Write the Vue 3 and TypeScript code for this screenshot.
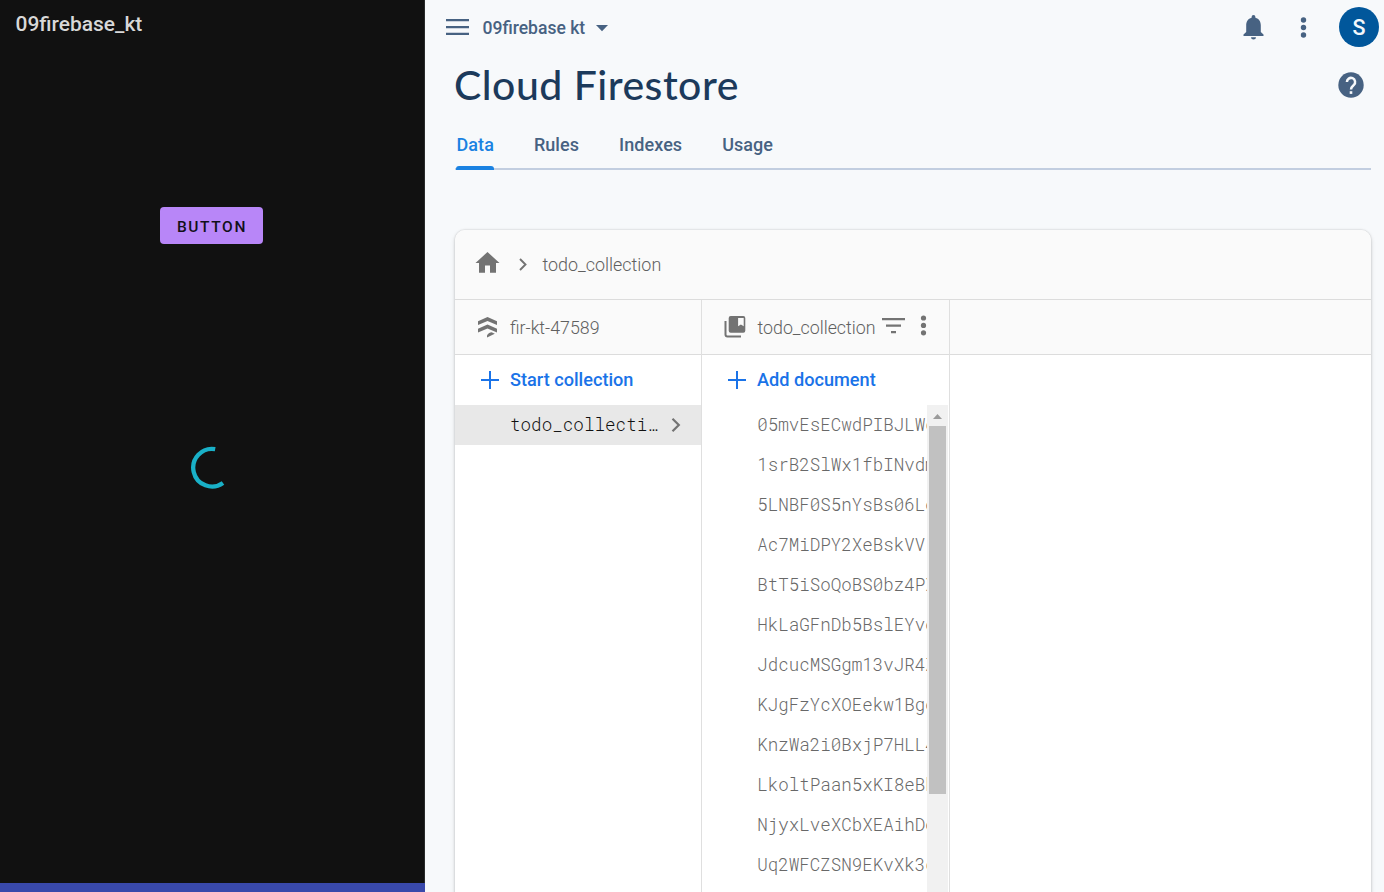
<script setup lang="ts">
import { ref } from 'vue'

const tabs = ['Data', 'Rules', 'Indexes', 'Usage']
const activeTab = ref('Data')

const documents: string[] = [
  '05mvEsECwdPIBJLWc',
  '1srB2SlWx1fbINvdm',
  '5LNBF0S5nYsBs06Lo',
  'Ac7MiDPY2XeBskVV',
  'BtT5iSoQoBS0bz4PX',
  'HkLaGFnDb5BslEYvo',
  'JdcucMSGgm13vJR4Z',
  'KJgFzYcXOEekw1Bgo',
  'KnzWa2i0BxjP7HLL4',
  'LkoltPaan5xKI8eBb',
  'NjyxLveXCbXEAihDo',
  'Uq2WFCZSN9EKvXk3c',
]
</script>

<template>
  <div class="screen">
    <section class="phone">
      <div class="phone-title">09firebase_kt</div>
      <button class="phone-button">BUTTON</button>
      <svg class="spinner" width="44" height="44" viewBox="0 0 44 44">
        <path d="M25.200 3.200A18.800 18.800 0 1 0 33 37" fill="none" stroke="#19b0c7" stroke-width="4.300" />
      </svg>
      <div class="phone-nav"></div>
    </section>

    <main class="console">
      <header class="topbar">
        <svg class="menu" width="24" height="18" viewBox="0 0 24 18">
          <path d="M0 1h23v2.200H0zM0 8h23v2.200H0zM0 14.800h23v2.200H0z" fill="#476282" />
        </svg>
        <span class="project">09firebase kt</span>
        <svg class="caret" width="12" height="7" viewBox="0 0 12 7"><path d="M0 0h12L6 6.200z" fill="#476282" /></svg>
        <svg class="bell" width="21" height="25" viewBox="-.5 0 21 25">
          <path d="M10 0a1.900 1.900 0 0 0-1.900 1.900v.8C4.500 3.600 2.700 6.700 2.700 10.200V17L0 19.600V21h20v-1.400L17.300 17v-6.800c0-3.500-1.800-6.600-5.400-7.500v-.8A1.900 1.900 0 0 0 10 0zM7.500 22.200a2.500 2.200 0 0 0 5 0z" fill="#476282" />
        </svg>
        <svg class="more" width="7" height="22" viewBox="-.5 0 7 22">
          <g fill="#476282"><circle cx="3" cy="3" r="2.700" /><circle cx="3" cy="10.500" r="2.700" /><circle cx="3" cy="18" r="2.700" /></g>
        </svg>
        <div class="avatar">S</div>
      </header>

      <div class="title-row">
        <h1>Cloud Firestore</h1>
        <svg width="26" height="26" viewBox="0 0 26 26">
          <circle cx="13" cy="13" r="12.700" fill="#476282" />
          <path d="M8.900 10a4.100 4.100 0 1 1 7 2.900c-1.600 1.400-2.900 2.100-2.900 4.700" fill="none" stroke="#f7f9fb" stroke-width="2.500" />
          <path d="M11.700 19.200h2.600v2.700h-2.600z" fill="#f7f9fb" />
        </svg>
      </div>

      <nav class="tabs">
        <a v-for="tab in tabs" :key="tab" class="tab" :class="{ active: tab === activeTab }" @click="activeTab = tab">{{ tab }}</a>
      </nav>

      <section class="card">
        <div class="crumbs">
          <svg class="home" width="25" height="21" viewBox="-.5 0 25 21"><path d="M9.500 20.800v-7.400h5v7.400h6V11H24L12 0 0 11h3.500v9.800z" fill="#737373" /></svg>
          <svg class="chev" width="8" height="13" viewBox="0 0 8 13"><path d="M1 1l5.500 5.500L1 12" fill="none" stroke="#737373" stroke-width="1.900" /></svg>
          <span class="crumb">todo_collection</span>
        </div>

        <div class="columns">
          <div class="column first">
            <div class="col-head">
              <svg class="db" width="21" height="21" viewBox="-.5 0 21 21">
                <g fill="#737373">
                  <path d="M10 0l9.500 4.200v3.900L10 4 .500 8.100V4.200z" />
                  <path d="M10 7.500l9.500 4.200v3.900L10 11.500.500 15.600v-3.900z" />
                  <path d="M9.500 20.500v-2.300c1.300-1.800 3-2.800 4.700-2.900l3.100 1.500z" />
                </g>
              </svg>
              <span class="root">fir-kt-47589</span>
            </div>
            <div class="add">
              <svg width="18" height="18" viewBox="0 0 18 18"><path d="M9 0v18M0 9h18" stroke="#1a73e8" stroke-width="2" /></svg>
              <span class="add-label">Start collection</span>
            </div>
            <div class="collection">
              <span class="mono">todo_collecti…</span>
              <svg width="10" height="16" viewBox="0 0 10 16"><path d="M1.500 1.800L7.800 8l-6.300 6.200" fill="none" stroke="#737373" stroke-width="2.200" /></svg>
            </div>
          </div>

          <div class="column second">
            <div class="col-head">
              <svg class="coll" width="23" height="22" viewBox="-.5 0 23 22">
                <path d="M1 5v13.500a2 2 0 0 0 2 2h13.500" fill="none" stroke="#737373" stroke-width="2" />
                <path d="M6.200 0h12.600a2 2 0 0 1 2 2v12.800a2 2 0 0 1-2 2H6.200a2 2 0 0 1-2-2V2a2 2 0 0 1 2-2zM13.600 2v8.300l2.800-1.900 2.800 1.900V2z" fill="#737373" fill-rule="evenodd" />
              </svg>
              <span class="coll-name">todo_collection</span>
              <svg class="filter" width="23" height="16" viewBox="0 0 23 16"><path d="M0 0h23v2.300H0zM4 6.500h15v2.300H4zM9 13h5v2.300H9z" fill="#737373" /></svg>
              <svg class="dots" width="7" height="21" viewBox="-.5 0 7 21">
                <g fill="#737373"><circle cx="3" cy="3" r="2.600" /><circle cx="3" cy="10.400" r="2.600" /><circle cx="3" cy="17.800" r="2.600" /></g>
              </svg>
            </div>
            <div class="add">
              <svg width="18" height="18" viewBox="0 0 18 18"><path d="M9 0v18M0 9h18" stroke="#1a73e8" stroke-width="2" /></svg>
              <span class="add-label">Add document</span>
            </div>
            <div class="doc-area">
              <ul class="docs">
                <li v-for="doc in documents" :key="doc" class="mono">{{ doc }}</li>
              </ul>
              <div class="scrollbar">
                <svg width="9" height="5" viewBox="0 0 9 5"><path d="M0 5L4.500 0 9 5z" fill="#9b9b9b" /></svg>
                <div class="thumb"></div>
              </div>
            </div>
          </div>

          <div class="column third">
            <div class="col-head"></div>
          </div>
        </div>
      </section>
    </main>
  </div>
</template>

<style>
html, body { overflow: hidden; }
</style>

<style scoped>
* { box-sizing: border-box; }
.screen { display: flex; width: 1384px; height: 892px; overflow: hidden; font-family: Roboto, "Liberation Sans", sans-serif; background: #f7f9fb; }
svg { display: block; flex: none; }
span { white-space: nowrap; }

.phone { width: 425px; flex: none; background: #111; display: flex; flex-direction: column; align-items: flex-start; border-right: 1px solid #292b2b; }
.phone-title { margin: 9.500px 0 0 15.500px; height: 28px; line-height: 28px; font-size: 20.950px; font-weight: 500; color: #d8d8d8; }
.phone-button { margin: 169px 0 0 160px; width: 103px; height: 37.500px; padding: 2px 0 0 1px; border: 0; border-radius: 4px; background: #b886f8; color: #121018; font: 500 15.500px/36px Roboto, sans-serif; letter-spacing: 1.600px; text-align: center; }
.spinner { margin: 201.500px 0 0 190px; }
.phone-nav { width: 425px; height: 9px; margin-top: auto; background: #3949ab; }

.console { flex: 1; padding-left: 30px; display: flex; flex-direction: column; }
.topbar { height: 54px; margin-left: -9px; display: flex; align-items: center; color: #476282; flex: none; }
.project { margin-left: 12.500px; width: 104px; font-size: 17.550px; font-weight: 500; line-height: 24px; padding-top: 2px; }
.caret { margin-left: 9px; margin-top: 2px; }
.bell { margin-left: auto; }
.more { margin-left: 36px; margin-top: 1px; }
.avatar { margin: 0 5px 0 32px; width: 40px; height: 40px; border-radius: 50%; background: #01579b; color: #f4f7fb; font-size: 21.500px; font-weight: 500; line-height: 41px; text-align: center; }

.title-row { height: 62px; display: flex; justify-content: space-between; align-items: center; padding-right: 20px; flex: none; }
h1 { margin: -1px 0 0 -1px; font: 500 41px/50px "Google Sans", "Product Sans", Lato, sans-serif; letter-spacing: .48px; color: #1c3a5b; }

.tabs { display: flex; height: 54px; width: 916px; border-bottom: 2px solid #c2cee0; gap: 40px; flex: none; }
.tab { height: 54px; font-size: 18px; font-weight: 500; color: #476282; line-height: 58px; letter-spacing: .06px; }
.tab.active { color: #1a82e2; padding-left: 1px; margin-left: .5px; display: flex; flex-direction: column; }
.tab.active::after { content: ""; flex: none; height: 3.500px; margin: -8px 0 0 -1px; background: #1a82e2; border-radius: 3px 3px 0 0; }

.card { margin-top: 60px; width: 916px; height: 700px; flex: none; background: #fff; border-radius: 10px 10px 0 0; overflow: hidden; box-shadow: 0 0 2px rgba(0,0,0,.22), 0 2px 5px rgba(0,0,0,.14); display: flex; flex-direction: column; }
.crumbs { height: 70px; background: #fafafa; border-bottom: 1px solid #dcdcdc; display: flex; align-items: center; color: #606060; flex: none; }
.home { margin: -4px 0 0 20px; }
.chev { margin-left: 18.500px; }
.crumb { margin-left: 16px; font-size: 17.900px; font-weight: 300; }
.columns { display: flex; flex: 1; }
.column { display: flex; flex-direction: column; min-width: 0; }
.first { width: 247px; border-right: 1px solid #dfdfdf; }
.second { width: 248px; border-right: 1px solid #dfdfdf; }
.third { flex: 1; }
.col-head { height: 55px; background: #fafafa; border-bottom: 1px solid #dcdcdc; display: flex; align-items: center; color: #606060; font-size: 17.800px; font-weight: 300; flex: none; }
.db { margin-left: 22px; }
.root { margin-left: 12px; padding-top: 1px; }
.coll { margin-left: 22px; }
.coll-name { margin-left: 10.500px; width: 118.500px; padding-top: 1px; }
.filter { margin: -2px 0 0 6px; }
.dots { margin: -4px 0 0 15px; }
.add { height: 50px; display: flex; align-items: center; padding-left: 26px; gap: 11px; color: #1a73e8; font-size: 18.150px; font-weight: 500; flex: none; }
.add-label { margin-top: -2px; }
.mono { font-family: "Roboto Mono", "Liberation Mono", monospace; font-size: 17.500px; font-weight: 350; }
.collection { height: 40px; background: #e8e8e8; display: flex; align-items: center; padding-left: 55px; color: #101010; flex: none; }
.collection .mono { font-size: 17.600px; margin-top: -2px; }
.collection svg { margin-left: 13.500px; }
.doc-area { display: flex; flex: 1; }
.docs { margin: 0; padding: 0 0 0 55.200px; width: 225px; overflow: hidden; list-style: none; color: #686868; }
.docs li { height: 40px; line-height: 40px; white-space: nowrap; }
.scrollbar { width: 21px; background: #f1f1f1; display: flex; flex-direction: column; align-items: center; padding-top: 9px; }
.thumb { margin-top: 7px; width: 17px; height: 368px; background: #c1c1c1; }
</style>
